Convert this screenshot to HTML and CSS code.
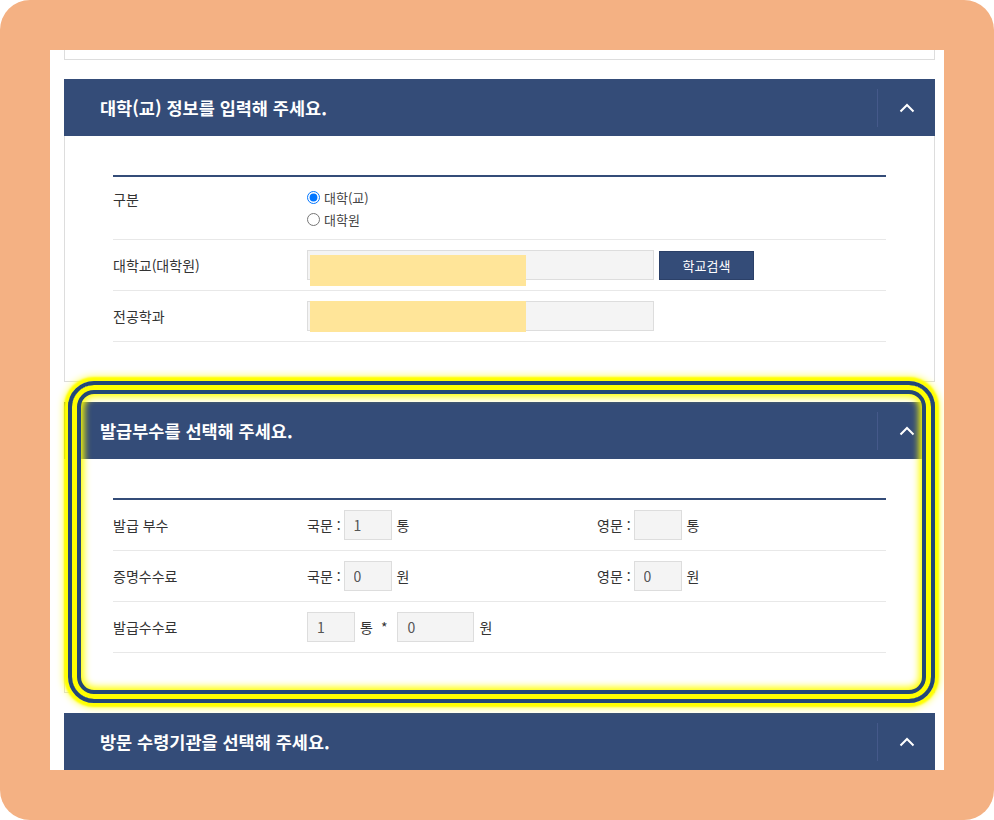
FILE: index.html
```html
<!DOCTYPE html>
<html lang="ko">
<head>
    <meta charset="UTF-8">
    <meta name="viewport" content="width=device-width, initial-scale=1.0">
    <title>증명서 발급 신청</title>
    <link rel="stylesheet" href="styles.css">
</head>
<body>
    <div class="screen">
        <div class="page">
            <div class="card-end"></div>

            <section class="panel">
                <div class="panel-head">
                    <h2>대학(교) 정보를 입력해 주세요.</h2>
                    <span class="toggle">
                        <svg width="16" height="10" viewBox="0 0 16 10"><polyline points="1.5,8.5 8,2 14.5,8.5" fill="none" stroke="#fff" stroke-width="2"/></svg>
                    </span>
                </div>
                <div class="panel-body">
                    <div class="form-table">
                        <div class="row row-top">
                            <div class="label label-top">구분</div>
                            <div class="value wide radios">
                                <label class="radio"><input type="radio" name="kind" checked> 대학(교)</label>
                                <label class="radio"><input type="radio" name="kind"> 대학원</label>
                            </div>
                        </div>
                        <div class="row">
                            <div class="label">대학교(대학원)</div>
                            <div class="value wide">
                                <span class="masked">
                                    <input class="field field-long" type="text">
                                    <span class="mask mask-low"></span>
                                </span>
                                <button class="btn" type="button">학교검색</button>
                            </div>
                        </div>
                        <div class="row">
                            <div class="label">전공학과</div>
                            <div class="value wide">
                                <span class="masked">
                                    <input class="field field-long" type="text">
                                    <span class="mask"></span>
                                </span>
                            </div>
                        </div>
                    </div>
                </div>
            </section>

            <section class="panel">
                <div class="panel-head">
                    <h2>발급부수를 선택해 주세요.</h2>
                    <span class="toggle">
                        <svg width="16" height="10" viewBox="0 0 16 10"><polyline points="1.5,8.5 8,2 14.5,8.5" fill="none" stroke="#fff" stroke-width="2"/></svg>
                    </span>
                </div>
                <div class="panel-body">
                    <div class="form-table">
                        <div class="row">
                            <div class="label">발급 부수</div>
                            <div class="value">
                                <span class="tag">국문 :</span>
                                <input class="field field-num" type="text" value="1">
                                <span class="unit">통</span>
                            </div>
                            <div class="value">
                                <span class="tag">영문 :</span>
                                <input class="field field-num" type="text" value="">
                                <span class="unit">통</span>
                            </div>
                        </div>
                        <div class="row">
                            <div class="label">증명수수료</div>
                            <div class="value">
                                <span class="tag">국문 :</span>
                                <input class="field field-num" type="text" value="0">
                                <span class="unit">원</span>
                            </div>
                            <div class="value">
                                <span class="tag">영문 :</span>
                                <input class="field field-num" type="text" value="0">
                                <span class="unit">원</span>
                            </div>
                        </div>
                        <div class="row">
                            <div class="label">발급수수료</div>
                            <div class="value wide">
                                <input class="field field-num" type="text" value="1">
                                <span class="unit">통</span>
                                <span class="times">*</span>
                                <input class="field field-sum" type="text" value="0">
                                <span class="unit">원</span>
                            </div>
                        </div>
                    </div>
                </div>
            </section>

            <section class="panel">
                <div class="panel-head">
                    <h2>방문 수령기관을 선택해 주세요.</h2>
                    <span class="toggle">
                        <svg width="16" height="10" viewBox="0 0 16 10"><polyline points="1.5,8.5 8,2 14.5,8.5" fill="none" stroke="#fff" stroke-width="2"/></svg>
                    </span>
                </div>
            </section>

            <!-- 강조 표시 -->
            <div class="highlight"></div>
        </div>
    </div>
</body>
</html>
```

FILE: styles.css
```css
body {
    margin: 0;
    background: #fff;
    font-family: "Noto Sans CJK KR", "Noto Sans", sans-serif;
    color: #333;
}
.screen {
    width: 994px;
    height: 820px;
    box-sizing: border-box;
    padding: 50px;
    background: #f4b183;
    border-radius: 30px;
}
.page {
    position: relative;
    height: 720px;
    background: #fff;
    overflow: hidden;
    padding: 0 9px 0 14px;
}
.card-end {
    height: 9px;
    border: 1px solid #ddd;
    border-top: 0;
    margin-bottom: 19px;
}
.panel + .panel {
    margin-top: 20px;
}
.panel-head {
    display: flex;
    align-items: center;
    height: 57px;
    background: #344c78;
    padding-left: 36px;
}
.panel-head h2 {
    flex: 1;
    margin: 0;
    font-size: 17.5px;
    font-weight: 700;
    color: #fff;
}
.toggle {
    width: 58px;
    height: 38px;
    display: flex;
    align-items: center;
    justify-content: center;
    border-left: 1px solid #45598a;
    box-sizing: border-box;
}
.panel-body {
    border: 1px solid #ddd;
    border-top: 0;
    padding: 39px 48px;
}
.form-table {
    border-top: 2px solid #344c78;
}
.row {
    display: grid;
    grid-template-columns: 194px 290px 1fr;
    align-items: center;
    padding: 10px 0;
    min-height: 30px;
    border-bottom: 1px solid #e8e8e8;
    font-size: 14px;
}
.row-top {
    padding: 9px 0;
    align-items: start;
}
.label-top {
    margin-top: 3px;
}
.value {
    display: flex;
    align-items: center;
}
.wide {
    grid-column: 2 / 4;
}
.radios {
    flex-direction: column;
    align-items: flex-start;
}
.radio {
    display: flex;
    align-items: center;
    height: 22px;
    font-size: 13px;
    color: #444;
}
.radio input {
    width: 13px;
    height: 13px;
    margin: 0 4px 0 0;
}
.field {
    height: 30px;
    box-sizing: border-box;
    background: #f4f4f4;
    border: 1px solid #ddd;
    padding: 0 9px;
    font-family: inherit;
    font-size: 14px;
    color: #555;
    outline: none;
}
.field-long {
    width: 347px;
}
.field-num {
    width: 48px;
}
.field-sum {
    width: 77px;
}
.masked {
    position: relative;
    display: inline-flex;
}
.mask {
    position: absolute;
    left: 3px;
    top: 0;
    width: 216px;
    height: 31px;
    background: #ffe599;
}
.mask-low {
    top: 5px;
}
.btn {
    width: 95px;
    height: 29px;
    margin-left: 5px;
    background: #344c78;
    border: 1px solid #2b4068;
    color: #fff;
    font-family: inherit;
    font-size: 13px;
}
.tag {
    margin-right: 3px;
}
.unit {
    margin-left: 5px;
}
.times {
    margin: 0 10px 0 8px;
}
.highlight {
    position: absolute;
    left: 18px;
    top: 331px;
    width: 867px;
    height: 322px;
    box-sizing: border-box;
    border: 4px solid #234777;
    border-radius: 26px;
    box-shadow:
        0 0 2px 4px #ffff00,
        0 0 7px 5px rgba(255, 255, 0, 0.6),
        inset 0 0 0 5px #ffff00,
        inset 0 0 0 9px #234777,
        inset 0 0 7px 12px #ffff00;
}
```
